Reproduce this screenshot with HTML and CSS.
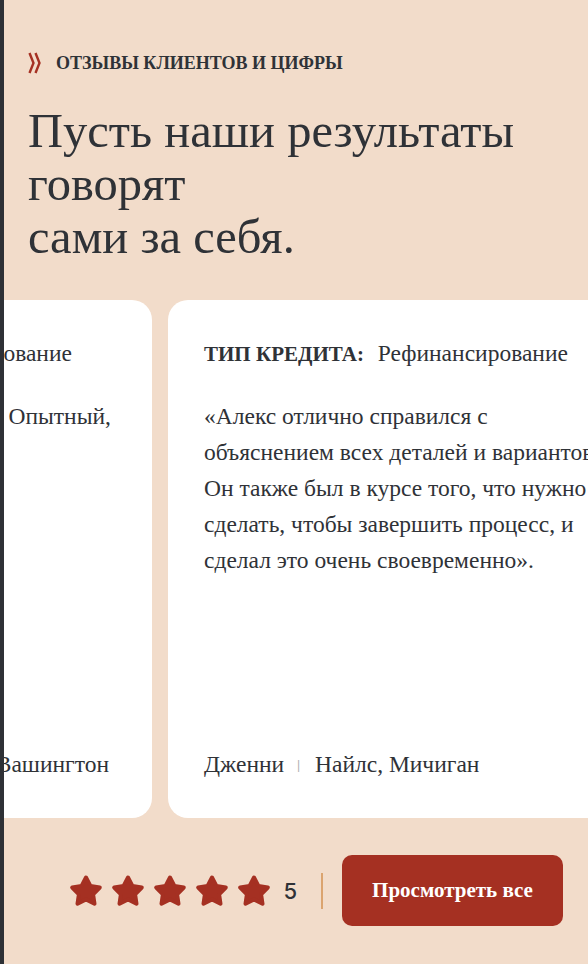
FILE: index.html
```
<!DOCTYPE html>
<html lang="ru">
<head>
    <meta charset="UTF-8">
    <meta name="viewport" content="width=device-width, initial-scale=1.0">
    <title>Отзывы клиентов</title>
    <link rel="stylesheet" href="styles.css">
</head>
<body>
    <div class="page">
        <section class="reviews">
            <div class="eyebrow">
                <svg class="eyebrow-icon" width="14" height="22" viewBox="0 0 14 22">
                    <path d="M1.5 1 L5.5 11 L1.5 21" fill="none" stroke="#a53022" stroke-width="2.4"/>
                    <path d="M7.5 1 L11.5 11 L7.5 21" fill="none" stroke="#a53022" stroke-width="2.4"/>
                </svg>
                <span>Отзывы клиентов и цифры</span>
            </div>

            <h2 class="title">Пусть наши результаты говорят<br>сами за себя.</h2>

            <div class="slider">
                <div class="track">
                    <div class="card">
                        <div class="loan"><b>Тип кредита:</b> Рефинансирование</div>
                        <p class="quote">«Всё прошло чётко и быстро. Опытный, знающий и отзывчивый».</p>
                        <div class="author">Майкл и Лаура <i>|</i> Ванкувер, Вашингтон</div>
                    </div>
                    <div class="card">
                        <div class="loan"><b>Тип кредита:</b> Рефинансирование</div>
                        <p class="quote">«Алекс отлично справился с объяснением всех деталей и вариантов. Он также был в курсе того, что нужно сделать, чтобы завершить процесс, и сделал это очень своевременно».</p>
                        <div class="author">Дженни <i>|</i> Найлс, Мичиган</div>
                    </div>
                </div>
            </div>

            <div class="summary">
                <div class="stars">
                    <svg viewBox="0 0 32 32"><path d="M16 2.5 L20.4 10.9 L29.8 12.5 L23.1 19.3 L24.5 28.7 L16 24.5 L7.5 28.7 L8.9 19.3 L2.2 12.5 L11.6 10.9 Z"/></svg>
                    <svg viewBox="0 0 32 32"><path d="M16 2.5 L20.4 10.9 L29.8 12.5 L23.1 19.3 L24.5 28.7 L16 24.5 L7.5 28.7 L8.9 19.3 L2.2 12.5 L11.6 10.9 Z"/></svg>
                    <svg viewBox="0 0 32 32"><path d="M16 2.5 L20.4 10.9 L29.8 12.5 L23.1 19.3 L24.5 28.7 L16 24.5 L7.5 28.7 L8.9 19.3 L2.2 12.5 L11.6 10.9 Z"/></svg>
                    <svg viewBox="0 0 32 32"><path d="M16 2.5 L20.4 10.9 L29.8 12.5 L23.1 19.3 L24.5 28.7 L16 24.5 L7.5 28.7 L8.9 19.3 L2.2 12.5 L11.6 10.9 Z"/></svg>
                    <svg viewBox="0 0 32 32"><path d="M16 2.5 L20.4 10.9 L29.8 12.5 L23.1 19.3 L24.5 28.7 L16 24.5 L7.5 28.7 L8.9 19.3 L2.2 12.5 L11.6 10.9 Z"/></svg>
                </div>
                <span class="score">5</span>
                <span class="divider"></span>
                <a class="btn" href="#">Просмотреть все</a>
            </div>
        </section>
    </div>
</body>
</html>
```
FILE: styles.css
```
* {
    margin: 0;
    padding: 0;
    box-sizing: border-box;
}

body {
    background: #f2dcca;
    font-family: 'Liberation Serif', 'Times New Roman', serif;
    color: #2f3237;
    overflow: hidden;
}

.page {
    min-height: 964px;
    border-left: 4px solid #2e3136;
}

.reviews {
    padding: 52px 0 40px;
}

/* надзаголовок */
.eyebrow {
    display: flex;
    align-items: center;
    gap: 14px;
    padding-left: 24px;
    font-size: 18px;
    font-weight: 700;
    text-transform: uppercase;
}

.eyebrow-icon {
    display: block;
}

.title {
    padding: 30px 24px 0;
    font-size: 48.5px;
    font-weight: 400;
    line-height: 53px;
}

/* карточки отзывов */
.slider {
    margin-top: 37px;
    overflow: hidden;
}

.track {
    display: flex;
    gap: 16px;
    margin-left: -332px;
}

.card {
    flex: 0 0 480px;
    height: 518px;
    padding: 40px 36px 40px;
    background: #fff;
    border-radius: 20px;
    display: flex;
    flex-direction: column;
    font-size: 23.5px;
}

.loan b {
    font-size: 21px;
    text-transform: uppercase;
    margin-right: 8px;
}

.quote {
    margin-top: 31px;
    line-height: 36px;
}

.author {
    margin-top: auto;
}

.author i {
    font-style: normal;
    font-family: 'Liberation Sans', sans-serif;
    font-size: 12px;
    color: #b0b0b0;
    margin: 0 9px 0 7px;
    position: relative;
    top: -3px;
}

/* итоговая оценка */
.summary {
    display: flex;
    align-items: center;
    justify-content: flex-end;
    padding: 37px 25px 0 0;
}

.stars {
    display: flex;
    gap: 10px;
}

.stars svg {
    width: 32px;
    height: 32px;
    overflow: visible;
    fill: #a53022;
    stroke: #a53022;
    stroke-width: 4;
    stroke-linejoin: round;
}

.score {
    margin-left: 13px;
    font-family: Inter, sans-serif;
    font-size: 22px;
    font-weight: 500;
}

.divider {
    width: 2px;
    height: 36px;
    margin: 0 19px 0 24px;
    background: #dba46f;
}

.btn {
    display: flex;
    align-items: center;
    justify-content: center;
    width: 221px;
    height: 71px;
    border-radius: 10px;
    background: #a53022;
    color: #fff;
    font-size: 21px;
    font-weight: 700;
    text-decoration: none;
}
```
